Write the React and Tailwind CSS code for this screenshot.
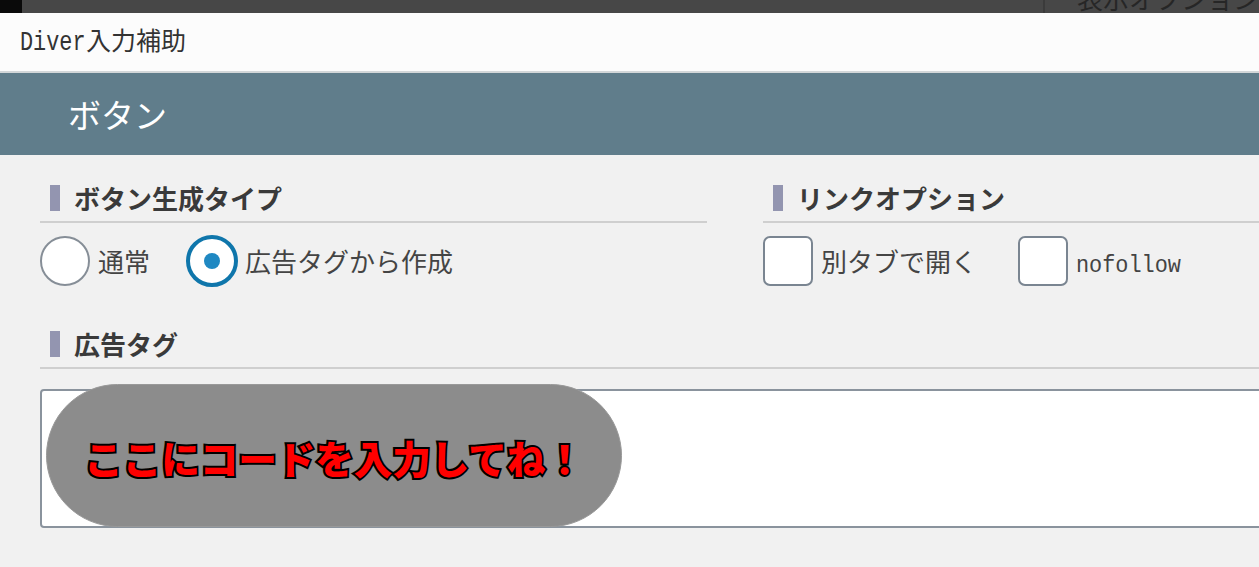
import React from 'react'

const jp = "font-['Noto_Sans_CJK_JP','Noto_Sans',sans-serif]"
const mono = "font-['Liberation_Mono','Noto_Sans_CJK_JP',monospace]"

function SectionHeading({ children }) {
  return (
    <div className="flex h-[26px] items-center border-b-2 border-[#cfcfcf] pb-[10px] pl-[10px] box-content">
      <span className="h-[26px] w-[10px] bg-[#9395b0]" />
      <span className="ml-[14px] text-[26px] font-bold leading-none text-[#3a3a3a]">{children}</span>
    </div>
  )
}

function Radio({ checked, label }) {
  return (
    <label className="flex items-center">
      {checked ? (
        <span className="-m-[1px] flex h-[52px] w-[52px] items-center justify-center rounded-full border-[4px] border-[#0f76ab] bg-white">
          <span className="h-[16px] w-[16px] rounded-full bg-[#1f88c2]" />
        </span>
      ) : (
        <span className="h-[50px] w-[50px] rounded-full border-2 border-[#868e97] bg-white" />
      )}
      <span className="ml-[8px] text-[26px] leading-none text-[#444]">{label}</span>
    </label>
  )
}

function Check({ label, latin }) {
  return (
    <label className="flex items-center">
      <span className="h-[50px] w-[50px] rounded-[7px] border-2 border-[#7a8591] bg-white" />
      {latin ? (
        <span className={`${mono} ml-[8px] mr-[-10px] mt-[9px] inline-block origin-left scale-x-[0.91] text-[24px] leading-none text-[#444]`}>
          {label}
        </span>
      ) : (
        <span className="ml-[8px] text-[26px] leading-none text-[#444]">{label}</span>
      )}
    </label>
  )
}

export default function App() {
  return (
    <div className={`h-[567px] w-[1259px] overflow-hidden bg-[#f1f1f1] ${jp}`}>
      {/* strip of the page behind the dialog */}
      <div className="flex h-[13px] overflow-hidden bg-[#474747]">
        <div className="w-[22px] bg-[#0a0a0a]" />
        <div className="flex-1" />
        <div className="w-[216px] border-l-2 border-[#3b3b3b] pl-[32px]">
          <div className="-mt-[17px] whitespace-nowrap text-[26px] leading-[30px] text-[#262626]">表示オプション</div>
        </div>
      </div>

      <div className="flex h-[60px] items-center border-b-2 border-[#d3d7d9] bg-[#fcfcfc] pl-[20px] text-[#333]">
        <span className="text-[25px] leading-none">
          <span className={`${mono} mr-[-18px] inline-block origin-left scale-x-[0.78] text-[28px] leading-none`}>Diver</span>
          入力補助
        </span>
      </div>

      <div className="flex h-[82px] items-center bg-[#607d8b] pl-[68px]">
        <span className="text-[33px] leading-none text-white">ボタン</span>
      </div>

      <div className="pl-[40px] pt-[30px]">
        <div className="flex gap-[56px]">
          <div className="w-[667px]">
            <SectionHeading>ボタン生成タイプ</SectionHeading>
            <div className="mt-[13px] flex h-[50px] items-center gap-[37px]">
              <Radio label="通常" />
              <Radio checked label="広告タグから作成" />
            </div>
          </div>
          <div className="flex-1">
            <SectionHeading>リンクオプション</SectionHeading>
            <div className="mt-[13px] flex h-[50px] items-center gap-[41px]">
              <Check label="別タブで開く" />
              <Check latin label="nofollow" />
            </div>
          </div>
        </div>

        <div className="mt-[45px]">
          <SectionHeading>広告タグ</SectionHeading>
        </div>

        <div className="relative mt-[20px] h-[139px] w-[1240px] rounded-[4px] border-2 border-[#8a939d] bg-white">
          <div className="absolute -top-[7px] left-[4px] flex h-[143px] w-[576px] items-center justify-center rounded-full border border-[#999] bg-[#8c8c8c]">
            <span className="mt-[4px] text-[38.5px] font-black leading-none text-[#ff0000] [-webkit-text-stroke:4px_#000] [paint-order:stroke_fill]">
              ここにコードを入力してね！
            </span>
          </div>
        </div>
      </div>
    </div>
  )
}
